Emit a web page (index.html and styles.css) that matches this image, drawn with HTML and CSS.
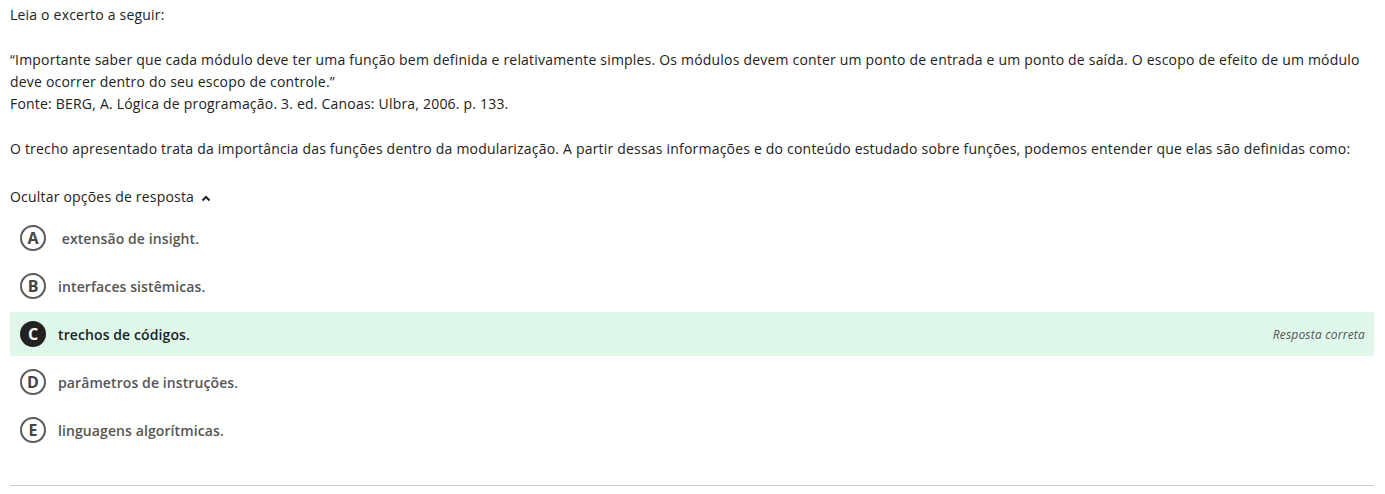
FILE: index.html
```html
<!DOCTYPE html>
<html lang="pt">
<head>
<meta charset="utf-8">
<link rel="stylesheet" href="styles.css">
</head>
<body>
<div class="question">
  <div class="statement">
    <p>Leia o excerto a seguir:</p>
    <p class="gap">“Importante saber que cada módulo deve ter uma função bem definida e relativamente simples. Os módulos devem conter um ponto de entrada e um ponto de saída. O escopo de efeito de um módulo deve ocorrer dentro do seu escopo de controle.”<br>Fonte: BERG, A. Lógica de programação. 3. ed. Canoas: Ulbra, 2006. p. 133.</p>
    <p class="gap">O trecho apresentado trata da importância das funções dentro da modularização. A partir dessas informações e do conteúdo estudado sobre funções, podemos entender que elas são definidas como:</p>
  </div>
  <div class="toggle">Ocultar opções de resposta <svg class="chev" width="10" height="7" viewBox="0 0 10 7"><path d="M1.5 5.5 L5 2 L8.5 5.5" fill="none" stroke="#222" stroke-width="2"/></svg></div>
  <ul class="options">
    <li class="option"><span class="letter">A</span><span class="label">&nbsp;extensão de insight.</span></li>
    <li class="option"><span class="letter">B</span><span class="label">interfaces sistêmicas.</span></li>
    <li class="option correct"><span class="letter">C</span><span class="label">trechos de códigos.</span><span class="feedback">Resposta correta</span></li>
    <li class="option"><span class="letter">D</span><span class="label">parâmetros de instruções.</span></li>
    <li class="option"><span class="letter">E</span><span class="label">linguagens algorítmicas.</span></li>
  </ul>
  <hr class="divider">
</div>
</body>
</html>
```
FILE: styles.css
```css
html, body {
  margin: 0;
  padding: 0;
  background: #fff;
}
body {
  font-family: "Open Sans", "Noto Sans", sans-serif;
  font-size: 14px;
  letter-spacing: 0.2px;
  color: #222;
}
.question {
  padding: 4px 11px 0 10px;
}
.statement p {
  margin: 0;
  line-height: 22px;
}
.statement p.gap {
  margin-top: 23px;
}
.toggle {
  margin-top: 26px;
  line-height: 22px;
  display: flex;
  align-items: center;
}
.chev {
  margin-left: 7px;
  margin-top: 2px;
}
.options {
  list-style: none;
  margin: 8px 0 0 0;
  padding: 0;
}
.option {
  display: flex;
  align-items: center;
  height: 44px;
  margin-bottom: 4px;
  padding-left: 10px;
  padding-right: 10px;
}
.letter {
  box-sizing: border-box;
  width: 26px;
  height: 26px;
  border: 2px solid #5a5a5a;
  border-radius: 50%;
  display: flex;
  align-items: center;
  justify-content: center;
  font-weight: 700;
  font-size: 16px;
  letter-spacing: 0;
  color: #444;
  flex: none;
}
.label {
  margin-left: 12px;
  font-size: 14px;
  letter-spacing: 0.1px;
  font-weight: 600;
  color: #555;
  flex: 1;
}
.correct {
  background: #dff8e9;
}
.correct .letter {
  background: #222;
  border-color: #222;
  color: #fff;
}
.correct .label {
  color: #222;
}
.feedback {
  font-style: italic;
  font-size: 12px;
  letter-spacing: 0.2px;
  color: #555;
  margin-right: -1px;
}
.divider {
  border: 0;
  border-top: 1px solid #ccc;
  margin: 33px 0 0 0;
}
```
